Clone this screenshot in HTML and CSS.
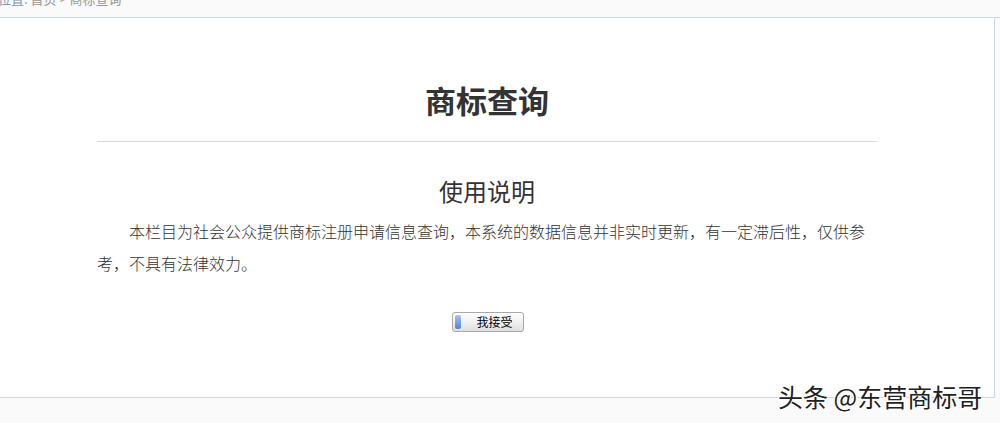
FILE: index.html
```html
<!DOCTYPE html>
<html lang="zh-CN">
<head>
    <meta charset="UTF-8">
    <title>商标查询</title>
    <link rel="stylesheet" href="styles.css">
</head>
<body>
    <div class="crumb">
        <div class="crumb-text"><a href="#">当前位置</a>: 首页 &gt; 商标查询</div>
    </div>
    <div class="main">
        <div class="content">
            <h1>商标查询</h1>
            <h2>使用说明</h2>
            <p>本栏目为社会公众提供商标注册申请信息查询，本系统的数据信息并非实时更新，有一定滞后性，仅供参考，不具有法律效力。</p>
            <div class="actions">
                <button type="button" class="accept"><span class="cap"></span>我接受</button>
            </div>
        </div>
    </div>
    <div class="watermark">头条 @东营商标哥</div>
</body>
</html>
```

FILE: styles.css
```css
body {
    margin: 0;
    background-color: #fafafa;
    font-family: "Noto Sans CJK SC", "Noto Sans", sans-serif;
    color: #333;
    overflow: hidden;
    height: 423px;
    position: relative;
}
.crumb {
    height: 17px;
    border-bottom: 1px solid #cdd7e6;
    overflow: hidden;
}
.crumb-text {
    margin-top: -9px;
    margin-left: -28px;
    font-size: 13px;
    line-height: 16px;
    color: #999;
}
.crumb-text a {
    color: #7b97bf;
    text-decoration: none;
}
.main {
    width: 995px;
    height: 379px;
    margin-left: -1px;
    background-color: #fff;
    border-right: 1px solid #cdd7e6;
    border-bottom: 1px solid #cdd7e6;
}
.content {
    padding: 62px 117px 0 98px;
}
.content h1 {
    margin: 0;
    font-size: 31px;
    line-height: 40px;
    font-weight: 700;
    text-align: center;
    padding-bottom: 21px;
    border-bottom: 1px solid #d9d9d9;
    color: #333;
}
.content h2 {
    margin: 33px 0 0;
    font-size: 24px;
    line-height: 32px;
    font-weight: 400;
    text-align: center;
    color: #333;
}
.content p {
    margin: 8px 0 0;
    font-size: 16px;
    line-height: 32px;
    text-indent: 2em;
    color: #333;
    font-weight: 300;
}
.actions {
    display: flex;
    justify-content: center;
    margin-top: 33px;
}
.accept {
    position: relative;
    width: 72px;
    height: 20px;
    padding: 0 0 0 14px;
    border: 1px solid #a8a8a8;
    border-radius: 3px;
    background: linear-gradient(#ffffff, #f1f1f1 50%, #dedede);
    font-family: "Noto Sans CJK SC", sans-serif;
    font-size: 12px;
    line-height: 18px;
    color: #000;
    cursor: pointer;
    margin-left: 1px;
}
.accept .cap {
    position: absolute;
    left: 2px;
    top: 2px;
    width: 6px;
    height: 14px;
    border-radius: 2px;
    background: linear-gradient(#a9c4ef, #4f83d6);
}
.watermark {
    position: absolute;
    left: 778px;
    top: 380px;
    font-size: 25px;
    line-height: 32px;
    color: #222;
    text-shadow: 1px 1px 0 #fff, -1px -1px 0 #fff, 1px -1px 0 #fff, -1px 1px 0 #fff;
    white-space: nowrap;
}
```
